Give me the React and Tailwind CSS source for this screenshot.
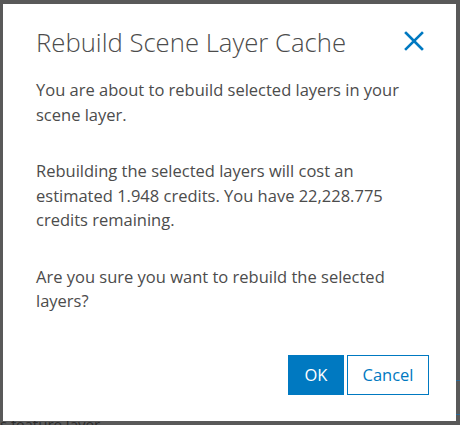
import React from "react";

const RebuildCacheModal = () => {
  return (
    <div className="relative w-[460px] h-[425px] bg-[#595959] overflow-hidden font-['Open_Sans','Noto_Sans',sans-serif]">
      {/* page behind the overlay */}
      <div className="absolute left-0 top-[417px] text-[15px] leading-none text-[#2b2b2b]">
        s feature layer
      </div>
      <div className="absolute right-0 top-[380px] w-[6px] h-px bg-[#2b6a99]" />
      <div className="absolute right-0 top-[414px] w-[6px] h-px bg-[#2b6a99]" />

      <div className="absolute left-[3px] top-[4px] w-[453px] h-[417px] bg-white flex flex-col">
        <div className="flex items-start justify-between pl-[33px] pr-[30px] pt-[22px]">
          <h1 className="text-[25.7px] font-light leading-[34px] text-[#4c4c4c]">
            Rebuild Scene Layer Cache
          </h1>
          <button className="mt-[3px] text-[#0079c1]">
            <svg width="24" height="24" viewBox="0 0 24 24" fill="none" stroke="currentColor" strokeWidth="2.6" strokeLinecap="square">
              <path d="M4 4 L20 20 M20 4 L4 20" />
            </svg>
          </button>
        </div>

        <div className="pl-[33px] pr-[20px] pt-[18px] text-[16.5px] leading-[24.5px] text-[#4c4c4c] flex flex-col gap-[32px]">
          <p>
            You are about to rebuild selected layers in your
            <br />
            scene layer.
          </p>
          <p>
            Rebuilding the selected layers will cost an
            <br />
            estimated 1.948 credits. You have 22,228.775
            <br />
            credits remaining.
          </p>
          <p>
            Are you sure you want to rebuild the selected
            <br />
            layers?
          </p>
        </div>

        <div className="mt-auto flex justify-end gap-[3px] pr-[27px] pb-[26px]">
          <button className="w-[56px] h-[40px] bg-[#0079c1] text-white text-[16.5px]">
            OK
          </button>
          <button className="w-[82px] h-[40px] border border-[#0079c1] bg-white text-[#0079c1] text-[16.5px]">
            Cancel
          </button>
        </div>
      </div>
    </div>
  );
};

export default function App() {
  return <RebuildCacheModal />;
}
